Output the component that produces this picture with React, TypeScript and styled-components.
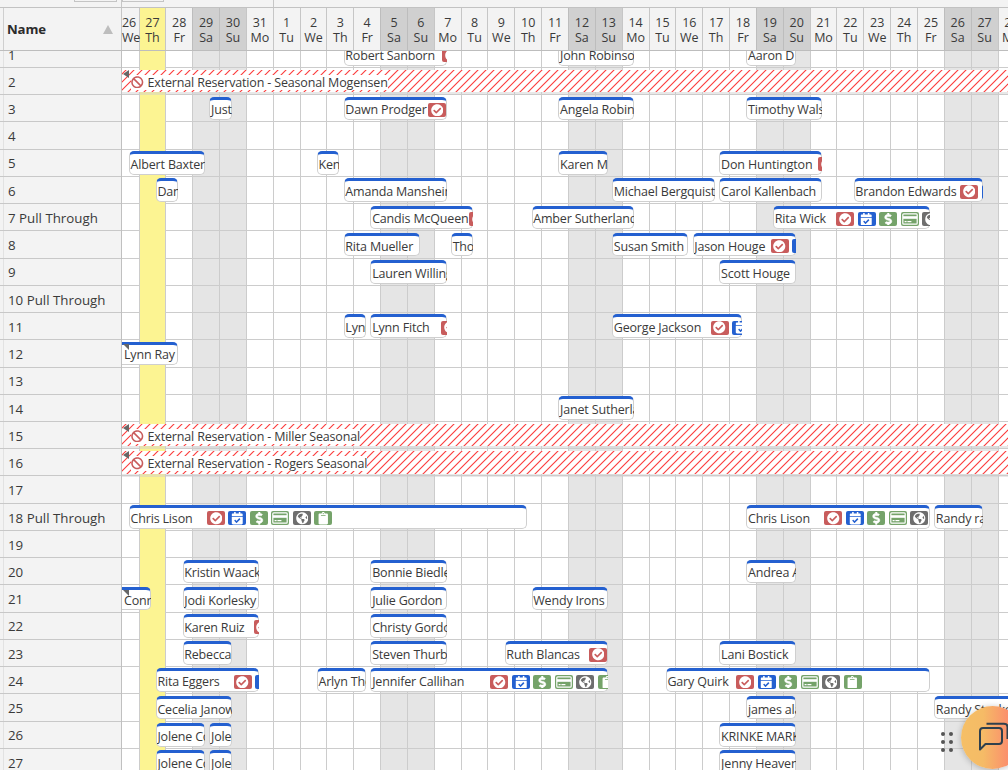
import React from 'react';
import styled, { createGlobalStyle, css } from 'styled-components';
import {
  FaBan,
  FaCalendarCheck,
  FaCheckCircle,
  FaClipboard,
  FaDollarSign,
  FaGlobeAmericas,
} from 'react-icons/fa';

const DAY = 26.85;
const ROW = 27.236;
const ROW_COUNT = 27;
const FIRST_DAY = 17.5;
const HIDDEN = DAY - FIRST_DAY;
const BAR_START = 17.2;
const BAR_END = 14.1;

const Global = createGlobalStyle`
  * { box-sizing: border-box; }
  body { margin: 0; background: #fff; }
`;

const Page = styled.div`
  width: 1008px;
  height: 770px;
  overflow: hidden;
  display: grid;
  grid-template-rows: 8px 43px 1fr;
  font-family: 'Open Sans', 'Noto Sans', sans-serif;
  font-size: 12.5px;
  color: #3a3a3a;
  background: #fff;
`;

const Toolbar = styled.div`
  display: flex;
  align-items: flex-start;
  background: #f3f3f3;
  border-bottom: 1px solid #c2c2c2;
`;

const ToolbarCell = styled.div<{ $width: number; $indent?: number }>`
  flex: none;
  width: ${(p) => p.$width}px;
  height: 7px;
  padding-left: ${(p) => p.$indent ?? 0}px;
  border-right: 1px solid #c6c6c6;
`;

const ButtonEdge = styled.div<{ $width: number }>`
  width: ${(p) => p.$width}px;
  height: 2px;
  border: 1px solid #c4c4c4;
  border-top: 0;
`;

const Header = styled.div`
  display: flex;
  background: #f3f3f3;
  border-bottom: 1px solid #bdbdbd;
  overflow: hidden;
`;

const Gutter = styled.div`
  flex: none;
  width: 4px;
  border-right: 1px solid #cfcfcf;
`;

const NameHeader = styled.div`
  flex: none;
  width: 117px;
  display: flex;
  align-items: center;
  justify-content: space-between;
  padding: 0 8px 0 3px;
  font-weight: 700;
  font-size: 13.2px;
  letter-spacing: -0.1px;
  color: #2b2b2b;
`;

const SortArrow = styled.span`
  border: 5.5px solid transparent;
  border-top: 0;
  border-bottom: 9px solid #bdbdbd;
`;

type Tone = 'plain' | 'weekend' | 'today';
const headTone = { plain: '#f3f3f3', weekend: '#d0d0d0', today: '#fcf492' };

const DayHead = styled.div<{ $tone: Tone; $first?: boolean }>`
  flex: none;
  width: ${(p) => (p.$first ? FIRST_DAY : DAY)}px;
  border-left: 1px solid ${(p) => (p.$tone === 'weekend' ? '#bdbdbd' : '#c6c6c6')};
  background: ${(p) => headTone[p.$tone]};
  display: flex;
  flex-direction: column;
  align-items: ${(p) => (p.$first ? 'flex-start' : 'center')};
  justify-content: center;
  line-height: 15px;
  padding-top: 1px;
  white-space: nowrap;
  ${(p) => p.$first && 'position: relative; z-index: 1; letter-spacing: -0.2px;'}
`;

const Body = styled.div`
  display: flex;
  min-height: 0;
  overflow: hidden;
`;

const Names = styled.div`
  flex: none;
  width: 121px;
  background: linear-gradient(90deg, #f3f3f3 3px, #e2e2e2 3px 4px, #f3f3f3 4px);
  margin-top: -10.3px;
`;

const NameCell = styled.div`
  height: ${ROW}px;
  display: flex;
  align-items: center;
  padding: 1.4px 0 0 8px;
  border-bottom: 1px solid #c8c8c8;
  font-size: 13.3px;
`;

const Timeline = styled.div`
  flex: 1;
  min-width: 0;
  display: grid;
  overflow: hidden;
  border-left: 1px solid #c0c0c0;
`;

const layer = css`
  grid-area: 1 / 1;
  min-width: 0;
  min-height: 0;
`;

const Columns = styled.div`
  ${layer}
  display: flex;
  height: 719px;
`;

const Column = styled.div<{ $tone: Tone; $first?: boolean }>`
  flex: none;
  width: ${(p) => (p.$first ? FIRST_DAY - 1 : DAY)}px;
  border-left: ${(p) => (p.$first ? '0' : '1px solid #ccc')};
  background: ${(p) => (p.$tone === 'weekend' ? '#e5e5e5' : '#fff')};
`;

const Lines = styled.div`
  ${layer}
  margin-top: -10.3px;
`;

const Line = styled.div`
  height: ${ROW}px;
  border-bottom: 1px solid #ccc;
`;

const Today = styled.div`
  ${layer}
  width: ${DAY}px;
  height: 719px;
  margin-left: ${FIRST_DAY - 1}px;
  background: #fcf492;
  border-left: 1px solid #ccc;
`;

const Rows = styled.div`
  ${layer}
  margin-top: -10.3px;
`;

const Row = styled.div`
  height: ${ROW}px;
  display: grid;
  grid-template-columns: repeat(36, ${DAY}px);
  grid-template-rows: 100%;
  margin-left: -${HIDDEN + 1}px;
`;

const Bar = styled.div<{ $from: number; $to: number }>`
  grid-area: 1 / ${(p) => Math.max(p.$from, 0) + 1} / 2 / ${(p) => p.$to + 2};
  height: 23.6px;
  margin: 1.4px ${BAR_END}px 0 ${(p) => (p.$from < 0 ? HIDDEN + 1 : BAR_START)}px;
  display: flex;
  align-items: center;
  background: #fff;
  border: 1px solid #cfcfcf;
  border-top: 3px solid #2460d0;
  border-radius: ${(p) => (p.$from < 0 ? '0 5px 5px 0' : '5px')};
  border-left-width: ${(p) => (p.$from < 0 ? 0 : 1)}px;
`;

const Clip = styled.div`
  flex: 1;
  min-width: 0;
  height: 20px;
  margin-right: -1px;
  display: flex;
  align-items: center;
  overflow: hidden;
  white-space: nowrap;
  padding-top: 1px;
  position: relative;
`;

const Guest = styled.span<{ $width?: number; $continued?: boolean }>`
  flex: none;
  width: ${(p) => (p.$width ? `${p.$width}px` : 'auto')};
  padding-left: ${(p) => (p.$continued ? 2 : 0.7)}px;
  letter-spacing: -0.17px;
`;

const Continued = styled.i`
  position: absolute;
  left: 1px;
  top: 0;
  border: 3px solid #666;
  border-left-color: transparent;
  border-bottom-color: transparent;
`;

const Badges = styled.span`
  flex: none;
  display: flex;
  gap: 3.5px;
`;

const badgeTone = { check: '#c85c5c', calendar: '#2460d0', money: '#75a36a', card: '#75a36a', globe: '#6e6e6e', clip: '#75a36a' };
type BadgeKind = keyof typeof badgeTone;

const Badge = styled.span<{ $kind: BadgeKind }>`
  width: 18px;
  height: 14px;
  border-radius: 2px;
  display: flex;
  align-items: center;
  justify-content: center;
  color: #fff;
  font-size: 12.5px;
  background: ${(p) => badgeTone[p.$kind]};
`;

const Blocked = styled.div`
  grid-area: 1 / 1 / 2 / 37;
  height: 22.5px;
  margin: 2px 0 0 ${HIDDEN + 1}px;
  position: relative;
  display: flex;
  align-items: center;
  background: #fff;
  box-shadow: 0 3px 0 rgba(205, 205, 205, 0.45);
`;

const Hatch = styled.svg`
  position: absolute;
  inset: 0;
  width: 100%;
  height: 100%;
`;

const BlockedLabel = styled.span`
  position: relative;
  margin: 2px 0 0 9px;
  height: 15px;
  display: flex;
  align-items: center;
  gap: 4px;
  background: #fff;
  white-space: nowrap;
  line-height: 15px;
  letter-spacing: -0.16px;
`;

const BlockedTick = styled.i`
  position: absolute;
  left: 1px;
  top: 0;
  border: 4px solid transparent;
  border-right: 6px solid #666;
  border-left: 0;
`;

const Drag = styled.div`
  position: absolute;
  left: 941px;
  top: 731.5px;
  display: grid;
  grid-template-columns: 4px 4px;
  gap: 4px;
`;

const Dot = styled.i`
  width: 4px;
  height: 4px;
  border-radius: 50%;
  background: #555;
`;

const Chat = styled.div`
  position: absolute;
  left: 951px;
  top: 696px;
  width: 57px;
  height: 74px;
  padding: 10px 0 0 10px;
  overflow: hidden;
`;

const ChatCircle = styled.div`
  width: 63px;
  height: 63px;
  border-radius: 50%;
  background: linear-gradient(90deg, #f5bf66 0%, #f5bb66 35%, #fb8f6c 75%);
  box-shadow: 0 1px 6px rgba(0, 0, 0, 0.25);
  padding: 15px 0 0 17px;
`;

const weekdays = ['Mo', 'Tu', 'We', 'Th', 'Fr', 'Sa', 'Su'];
const days = Array.from({ length: 34 }, (_, i) => ({
  date: i < 6 ? 26 + i : i - 5,
  weekday: weekdays[(i + 2) % 7],
  tone: (i === 1 ? 'today' : (i + 2) % 7 > 4 ? 'weekend' : 'plain') as Tone,
}));

type Booking = [from: number, to: number, guest: string, width?: number, badges?: BadgeKind[]];
const all: BadgeKind[] = ['check', 'calendar', 'money', 'card', 'globe', 'clip'];
const some = (n: number) => all.slice(0, n);

const bookings: Record<number, Booking[]> = {
  1: [[8, 12, 'Robert Sanborn', 97.5, some(1)], [16, 19, 'John Robinson'], [23, 25, 'Aaron D']],
  3: [[3, 4, 'Justin'], [8, 12, 'Dawn Prodger', 83.5, some(1)], [16, 19, 'Angela Robinson'], [23, 26, 'Timothy Walsh']],
  5: [[0, 3, 'Albert Baxter'], [7, 8, 'Ken'], [16, 18, 'Karen M'], [22, 26, 'Don Huntington', 98, some(1)]],
  6: [[1, 2, 'Dan'], [8, 12, 'Amanda Mansheim'], [18, 22, 'Michael Bergquist'], [22, 26, 'Carol Kallenbach'], [27, 32, 'Brandon Edwards', 105.5, some(2)]],
  7: [[9, 13, 'Candis McQueen', 97.5, some(1)], [15, 19, 'Amber Sutherland'], [24, 30, 'Rita Wick', 62, some(5)]],
  8: [[8, 11, 'Rita Mueller'], [12, 13, 'Thomas'], [18, 21, 'Susan Smith'], [21, 25, 'Jason Houge', 77, some(2)]],
  9: [[9, 12, 'Lauren Willing'], [22, 25, 'Scott Houge']],
  11: [[8, 9, 'Lynn'], [9, 12, 'Lynn Fitch', 70, some(1)], [18, 23, 'George Jackson', 97.5, some(2)]],
  12: [[-1, 2, 'Lynn Ray']],
  14: [[16, 19, 'Janet Sutherland']],
  18: [[0, 15, 'Chris Lison', 77, some(6)], [23, 30, 'Chris Lison', 77, some(5)], [30, 32, 'Randy ray']],
  20: [[2, 5, 'Kristin Waack'], [9, 12, 'Bonnie Biedler'], [23, 25, 'Andrea A']],
  21: [[-1, 1, 'Conrad'], [2, 5, 'Jodi Korlesky'], [9, 12, 'Julie Gordon'], [15, 18, 'Wendy Irons']],
  22: [[2, 5, 'Karen Ruiz', 70, some(1)], [9, 12, 'Christy Gordon']],
  23: [[2, 4, 'Rebecca'], [9, 12, 'Steven Thurber'], [14, 18, 'Ruth Blancas', 83.5, some(1)], [22, 25, 'Lani Bostick']],
  24: [[1, 5, 'Rita Eggers', 77, some(2)], [7, 9, 'Arlyn Thom'], [9, 18, 'Jennifer Callihan', 119, some(6)], [20, 30, 'Gary Quirk', 69.5, some(6)]],
  25: [[1, 4, 'Cecelia Janow'], [23, 25, 'james alan'], [30, 34, 'Randy Stocker']],
  26: [[1, 3, 'Jolene Cole'], [3, 4, 'Jolene'], [22, 25, 'KRINKE MARK']],
  27: [[1, 3, 'Jolene Cole'], [3, 4, 'Jolene'], [22, 25, 'Jenny Heaven']],
};

const blocked: Record<number, string> = {
  2: 'Seasonal Mogensen',
  15: 'Miller Seasonal',
  16: 'Rogers Seasonal',
};

const hatchLines = Array.from({ length: 115 }, (_, i) => `M${i * 8 - 20} 24l26 -26`).join('');

const CardIcon = () => (
  <svg width="16" height="12" viewBox="0 0 16 12" fill="#fff">
    <rect x="0.800" y="0.800" width="14.400" height="10.400" rx="1" fill="none" stroke="#fff" strokeWidth="1.200" />
    <rect x="1" y="3.200" width="14" height="2.600" />
    <rect x="2.600" y="8" width="2" height="1.200" />
    <rect x="5.400" y="8" width="4" height="1.200" />
  </svg>
);

const badgeIcon: Record<BadgeKind, React.ReactNode> = {
  check: <FaCheckCircle />,
  calendar: <FaCalendarCheck />,
  money: <FaDollarSign stroke="#fff" strokeWidth={24} />,
  card: <CardIcon />,
  globe: <FaGlobeAmericas />,
  clip: <FaClipboard />,
};

const pullThrough = [7, 10, 18];
const rowNumbers = Array.from({ length: ROW_COUNT }, (_, i) => i + 1);

export default function App() {
  return (
    <Page>
      <Global />
      <Toolbar>
        <ToolbarCell $width={122} $indent={74}>
          <ButtonEdge $width={43} />
        </ToolbarCell>
        <ToolbarCell $width={152}>
          <ButtonEdge $width={42} />
        </ToolbarCell>
      </Toolbar>
      <Header>
        <Gutter />
        <NameHeader>
          Name
          <SortArrow />
        </NameHeader>
        {days.map((d, i) => (
          <DayHead key={i} $tone={d.tone} $first={i === 0}>
            <span>{d.date}</span>
            <span>{d.weekday}</span>
          </DayHead>
        ))}
      </Header>
      <Body>
        <Names>
          {rowNumbers.map((n) => (
            <NameCell key={n}>{pullThrough.includes(n) ? `${n} Pull Through` : n}</NameCell>
          ))}
        </Names>
        <Timeline>
          <Columns>
            {days.map((d, i) => (
              <Column key={i} $tone={d.tone} $first={i === 0} />
            ))}
          </Columns>
          <Lines>
            {rowNumbers.map((n) => (
              <Line key={n} />
            ))}
          </Lines>
          <Today />
          <Rows>
            {rowNumbers.map((n) => (
              <Row key={n}>
                {blocked[n] && (
                  <Blocked>
                    <Hatch>
                      <path d={hatchLines} stroke="#fb3c3c" strokeWidth="1.100" fill="none" />
                    </Hatch>
                    <BlockedTick />
                    <BlockedLabel>
                      <FaBan size={12.5} color="#c85c5c" />
                      External Reservation - {blocked[n]}
                    </BlockedLabel>
                  </Blocked>
                )}
                {(bookings[n] ?? []).map(([from, to, guest, width, badges]) => (
                  <Bar key={from} $from={from} $to={to}>
                    <Clip>
                      {from < 0 && <Continued />}
                      <Guest $width={width} $continued={from < 0}>
                        {guest}
                      </Guest>
                      {badges && (
                        <Badges>
                          {badges.map((b) => (
                            <Badge key={b} $kind={b}>
                              {badgeIcon[b]}
                            </Badge>
                          ))}
                        </Badges>
                      )}
                    </Clip>
                  </Bar>
                ))}
              </Row>
            ))}
          </Rows>
        </Timeline>
      </Body>
      <Drag>
        {rowNumbers.slice(0, 6).map((n) => (
          <Dot key={n} />
        ))}
      </Drag>
      <Chat>
        <ChatCircle>
          <svg width="34" height="32" viewBox="0 0 34 32" fill="none" stroke="#2f404d" strokeWidth="2" strokeLinejoin="round">
            <path d="M5 7H21Q24 7 24 10V20Q24 23 21 23H7.500L2 28.500V10Q2 7 5 7Z" />
            <path d="M8.500 2.700H26Q29.500 2.700 29.500 6V18" />
          </svg>
        </ChatCircle>
      </Chat>
    </Page>
  );
}
